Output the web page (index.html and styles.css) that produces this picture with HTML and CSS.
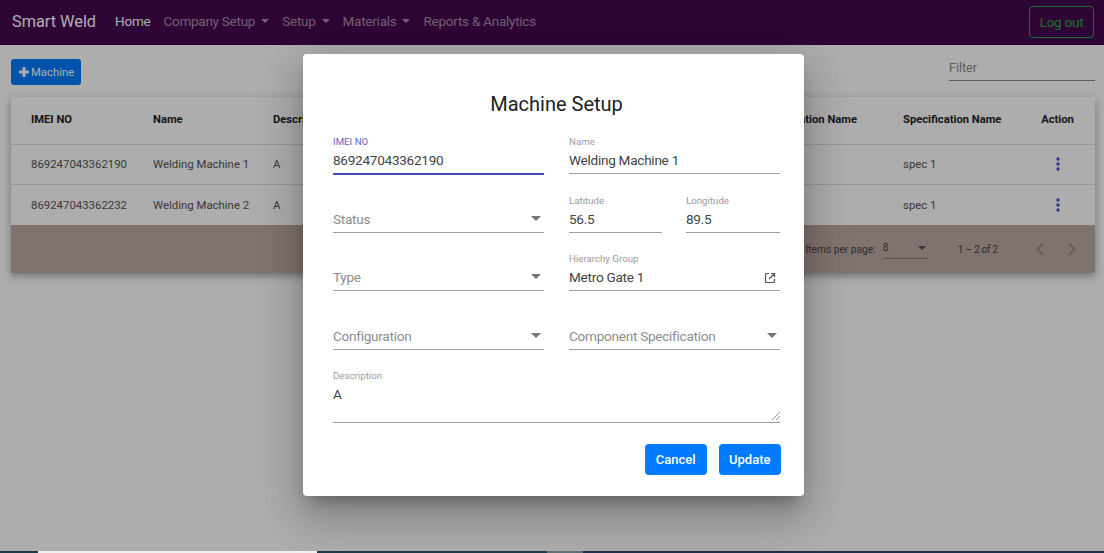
FILE: index.html
```html
<!DOCTYPE html>
<html lang="en">
<head>
    <meta charset="UTF-8">
    <meta name="viewport" content="width=device-width, initial-scale=1.0">
    <title>Smart Weld</title>
    <link rel="stylesheet" href="styles.css">
</head>
<body>
    <div class="page">
        <nav class="navbar">
            <a class="brand">Smart Weld</a>
            <ul class="nav-links">
                <li class="active">Home</li>
                <li class="dropdown">Company Setup</li>
                <li class="dropdown">Setup</li>
                <li class="dropdown">Materials</li>
                <li>Reports &amp; Analytics</li>
            </ul>
            <button class="logout">Log out</button>
        </nav>

        <main class="content">
            <div class="toolbar">
                <button class="add-btn">
                    <svg width="10" height="10" viewBox="0 0 10 10"><path d="M3.5 0h3v3.5H10v3H6.500V10h-3V6.500H0v-3h3.500z" fill="currentColor"/></svg>
                    Machine
                </button>
                <div class="filter">Filter</div>
            </div>

            <div class="table-card">
                <table class="machines">
                    <colgroup>
                        <col class="col-imei">
                        <col class="col-name">
                        <col class="col-desc">
                        <col class="col-config">
                        <col class="col-spec">
                        <col class="col-action">
                    </colgroup>
                    <thead>
                        <tr>
                            <th>IMEI NO</th>
                            <th>Name</th>
                            <th>Description</th>
                            <th>Configuration Name</th>
                            <th>Specification Name</th>
                            <th class="action">Action</th>
                        </tr>
                    </thead>
                    <tbody>
                        <tr>
                            <td>869247043362190</td>
                            <td>Welding Machine 1</td>
                            <td>A</td>
                            <td></td>
                            <td>spec 1</td>
                            <td class="action"><svg width="4" height="14" viewBox="0 0 4 14"><circle cx="2" cy="2" r="1.7"/><circle cx="2" cy="7" r="1.7"/><circle cx="2" cy="12" r="1.7"/></svg></td>
                        </tr>
                        <tr>
                            <td>869247043362232</td>
                            <td>Welding Machine 2</td>
                            <td>A</td>
                            <td></td>
                            <td>spec 1</td>
                            <td class="action"><svg width="4" height="14" viewBox="0 0 4 14"><circle cx="2" cy="2" r="1.7"/><circle cx="2" cy="7" r="1.7"/><circle cx="2" cy="12" r="1.7"/></svg></td>
                        </tr>
                    </tbody>
                </table>
                <div class="paginator">
                    <span class="per-page">Items per page:</span>
                    <span class="per-page-select">8<i class="caret"></i></span>
                    <span class="range">1 – 2 of 2</span>
                    <svg class="chev" width="10" height="14" viewBox="0 0 10 14"><path d="M8 1.5 2.5 7 8 12.5" fill="none" stroke="currentColor" stroke-width="1.7"/></svg>
                    <svg class="chev" width="10" height="14" viewBox="0 0 10 14"><path d="M2 1.5 7.5 7 2 12.5" fill="none" stroke="currentColor" stroke-width="1.7"/></svg>
                </div>
            </div>
        </main>

        <div class="backdrop">
            <div class="modal">
                <h2>Machine Setup</h2>
                <form class="form-grid">
                    <div class="field focused">
                        <label>IMEI NO</label>
                        <div class="value">869247043362190</div>
                    </div>
                    <div class="field">
                        <label>Name</label>
                        <div class="value">Welding Machine 1</div>
                    </div>
                    <div class="field select">
                        <div class="value empty">Status</div>
                    </div>
                    <div class="field-pair">
                        <div class="field">
                            <label>Latitude</label>
                            <div class="value">56.5</div>
                        </div>
                        <div class="field">
                            <label>Longitude</label>
                            <div class="value">89.5</div>
                        </div>
                    </div>
                    <div class="field select">
                        <div class="value empty">Type</div>
                    </div>
                    <div class="field">
                        <label>Hierarchy Group</label>
                        <div class="value">Metro Gate 1</div>
                        <svg class="open-icon" width="12" height="12" viewBox="0 0 12 12"><path d="M5 1.500H2.200a.7.7 0 0 0-.7.7v7.600a.7.7 0 0 0 .7.7h7.600a.7.7 0 0 0 .7-.7V7M7 1.500h3.500V5M10.500 1.500 5 7" fill="none" stroke="currentColor" stroke-width="1.200"/></svg>
                    </div>
                    <div class="field select">
                        <div class="value empty">Configuration</div>
                    </div>
                    <div class="field select">
                        <div class="value empty">Component Specification</div>
                    </div>
                    <div class="field wide">
                        <label>Description</label>
                        <div class="value">A</div>
                        <svg class="resize-icon" width="8" height="8" viewBox="0 0 8 8"><path d="M0 8 8 0M4 8l4-4" stroke="#777" stroke-width="0.8"/></svg>
                    </div>
                </form>
                <div class="modal-actions">
                    <button class="primary">Cancel</button>
                    <button class="primary">Update</button>
                </div>
            </div>
        </div>
    </div>

    <div class="taskbar">
        <span class="tb-dark tb-start"></span>
        <span class="tb-white"></span>
        <span class="tb-dark tb-mid"></span>
        <span class="tb-grey"></span>
        <span class="tb-dark tb-end"></span>
    </div>
</body>
</html>
```

FILE: styles.css
```css
* {
    box-sizing: border-box;
}
body {
    margin: 0;
    height: 553px;
    overflow: hidden;
    font-family: Roboto, Arial, sans-serif;
    color: #333;
    background-color: #fff;
}
.page {
    position: relative;
    height: 551px;
    overflow: hidden;
}

/* navbar */
.navbar {
    display: flex;
    align-items: center;
    height: 45px;
    padding: 0 10px 2px 12px;
    background-color: #45084e;
}
.brand {
    font-size: 16.3px;
    color: #fff;
    margin-right: 19px;
}
.nav-links {
    display: flex;
    gap: 13px;
    flex: 1;
    margin: 0 0 2px;
    padding: 0;
    list-style: none;
    font-size: 13.5px;
    letter-spacing: -0.25px;
    color: #a88fac;
}
.nav-links .active {
    color: #fff;
}
.dropdown::after {
    content: "";
    display: inline-block;
    margin-left: 6px;
    vertical-align: 3px;
    border-top: 4px solid currentColor;
    border-left: 4px solid transparent;
    border-right: 4px solid transparent;
}
.logout {
    width: 65px;
    height: 32px;
    padding: 0;
    font: 13.5px Roboto, Arial, sans-serif;
    letter-spacing: -0.25px;
    color: #28a745;
    background: none;
    border: 1px solid #28a745;
    border-radius: 4px;
}

/* content behind the dialog */
.content {
    padding: 14px 9px 0 11px;
}
.toolbar {
    display: flex;
    justify-content: space-between;
    height: 38px;
}
.add-btn {
    display: flex;
    align-items: center;
    gap: 2px;
    width: 70px;
    height: 26px;
    padding: 0 0 0 8px;
    font: 11.3px Roboto, Arial, sans-serif;
    color: #fff;
    background-color: #007bff;
    border: none;
    border-radius: 3px;
}
.filter {
    width: 146px;
    height: 22px;
    font-size: 12.5px;
    line-height: 18px;
    color: #8a8a8a;
    border-bottom: 1px solid #8a8a8a;
}
.table-card {
    background-color: #fff;
    box-shadow: 0 3px 8px rgba(0, 0, 0, 0.35);
}
.machines {
    width: 100%;
    table-layout: fixed;
    border-collapse: collapse;
    font-size: 11.4px;
}
.col-imei { width: 142px; }
.col-name { width: 120px; }
.col-desc { width: 483px; }
.col-config { width: 147px; }
.col-spec { width: 124px; }
.machines th,
.machines td {
    padding: 0;
    text-align: left;
    white-space: nowrap;
    border-bottom: 1px solid #ddd;
}
.machines th {
    height: 47px;
    padding-bottom: 1px;
    font-weight: 700;
    font-size: 11.2px;
    color: #222;
}
.machines td {
    height: 40px;
    color: #555;
}
.machines tbody tr:last-child td {
    height: 41px;
    border-bottom: none;
}
.machines th:first-child,
.machines td:first-child {
    padding-left: 20px;
}
.machines .action {
    padding-right: 7px;
    text-align: center;
}
.machines svg {
    display: inline-block;
    vertical-align: middle;
    fill: #3f51d5;
}
.paginator {
    display: flex;
    align-items: center;
    justify-content: flex-end;
    height: 48px;
    padding-right: 18px;
    font-size: 10.2px;
    color: #444;
    background-color: #bda9a3;
}
.per-page {
    margin-right: 7px;
}
.per-page-select {
    position: relative;
    width: 45px;
    height: 19px;
    margin-right: 30px;
    line-height: 16px;
    border-bottom: 1px solid #777;
}
.caret {
    position: absolute;
    top: 6px;
    right: 2px;
    border-top: 4px solid #555;
    border-left: 4px solid transparent;
    border-right: 4px solid transparent;
}
.range {
    margin-right: 37px;
    letter-spacing: -0.3px;
}
.chev {
    color: #918583;
}
.chev + .chev {
    margin-left: 22px;
}

/* dialog */
.backdrop {
    position: absolute;
    inset: 0;
    padding: 54px 300px 0 303px;
    background-color: rgba(0, 0, 0, 0.32);
}
.modal {
    height: 442px;
    padding: 36px 24px 21px 30px;
    color: #444;
    background-color: #fff;
    border-radius: 4px;
    box-shadow: 0 11px 15px -7px rgba(0, 0, 0, 0.3), 0 24px 38px 3px rgba(0, 0, 0, 0.14), 0 9px 46px 8px rgba(0, 0, 0, 0.12);
}
.modal h2 {
    margin: 0 0 16px;
    text-align: center;
    font-size: 20px;
    line-height: 28px;
    font-weight: 400;
    color: #222;
}
.form-grid {
    display: grid;
    grid-template-columns: 1fr 1fr;
    grid-auto-rows: 40px;
    column-gap: 25px;
    row-gap: 18.5px;
}
.field-pair {
    display: grid;
    grid-template-columns: 93px 94px;
    column-gap: 24px;
}
.field {
    position: relative;
    display: flex;
    flex-direction: column;
    justify-content: flex-end;
    padding-bottom: 3px;
    border-bottom: 1px solid #9e9e9e;
}
.field label {
    font-size: 9.7px;
    line-height: 12px;
    margin-bottom: 2px;
    color: #9a9a9a;
}
.value {
    font-size: 13.6px;
    line-height: 20px;
    letter-spacing: -0.28px;
}
.value.empty {
    color: #8c8c8c;
}
.field.focused {
    margin-bottom: -1px;
    border-bottom: 2px solid #3f51b5;
}
.field.focused label {
    color: #5c6bc0;
}
.field.select::after {
    content: "";
    position: absolute;
    right: 3px;
    bottom: 11px;
    border-top: 5px solid #757575;
    border-left: 5px solid transparent;
    border-right: 5px solid transparent;
}
.open-icon {
    position: absolute;
    right: 4px;
    bottom: 6px;
    color: #555;
}
.resize-icon {
    position: absolute;
    right: 0;
    bottom: 2px;
}
.wide {
    grid-column: span 2;
    height: 55px;
    justify-content: flex-start;
    padding-top: 2px;
}
.modal-actions {
    display: flex;
    justify-content: flex-end;
    gap: 12px;
    margin: 36px -1px 0 0;
}
.primary {
    height: 31px;
    padding: 0 11px;
    font: 500 13px Roboto, Arial, sans-serif;
    color: #fff;
    background-color: #007bff;
    border: none;
    border-radius: 4px;
}
.primary + .primary {
    padding: 0 10.5px;
}

.taskbar {
    display: flex;
    height: 2px;
}
.tb-dark { background-color: #1f3a4a; }
.tb-start { width: 38px; }
.tb-white { width: 279px; background-color: #f0f0f0; }
.tb-mid { width: 230px; }
.tb-grey { width: 36px; background-color: #5f7078; }
.tb-end { flex: 1; background-color: #1d2f4a; }
```
